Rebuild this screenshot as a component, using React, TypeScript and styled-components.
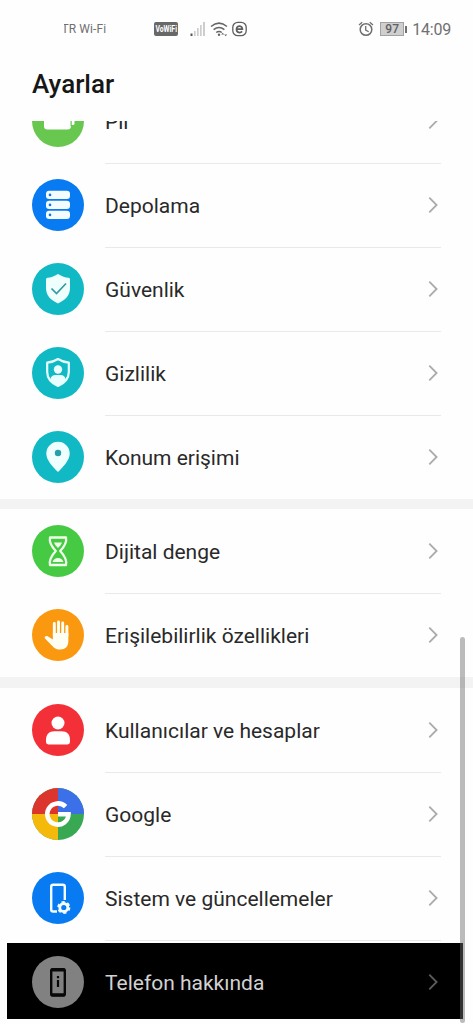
import React from "react";
import styled, { createGlobalStyle } from "styled-components";

const GlobalStyle = createGlobalStyle`
  * { box-sizing: border-box; }
  body { margin: 0; background: #fefefe; font-family: Roboto, "Noto Sans", sans-serif; }
`;

const Screen = styled.main`
  position: relative;
  display: flex;
  flex-direction: column;
  width: 473px;
  height: 1024px;
  overflow: hidden;
  background: #fefefe;
`;

const StatusBar = styled.header`
  display: flex;
  align-items: center;
  flex: none;
  height: 58px;
  padding: 0 22px 0 64px;
  color: #707070;
`;

const Carrier = styled.span`
  width: 90px;
  font-size: 12px;
  letter-spacing: 0.1px;
  overflow: hidden;
  white-space: nowrap;
`;

/* The first letter of the carrier name is partly hidden at its left edge. */
const CarrierName = styled.span`
  display: inline-block;
  margin-left: -2.5px;
`;

const VoWifi = styled.span`
  display: flex;
  align-items: center;
  justify-content: center;
  width: 24px;
  height: 14px;
  border-radius: 2px;
  background: #686868;
  color: #fff;
  font-size: 9px;
  font-weight: 700;
  line-height: 14px;
`;

const VoWifiText = styled.span`
  transform: scaleX(0.76);
`;

const StatusIcons = styled.span`
  display: flex;
  align-items: center;
  gap: 4px;
  margin-left: 12px;
`;

const StatusRight = styled.span`
  display: flex;
  align-items: center;
  margin-left: auto;
`;

const Battery = styled.span`
  display: flex;
  align-items: center;
  margin: 0 5px 0 6px;
  &::after {
    content: "";
    width: 2px;
    height: 7px;
    margin-left: 1px;
    background: #707070;
  }
`;

const BatteryLevel = styled.span`
  width: 24px;
  height: 14px;
  border: 1px solid #a2a2a2;
  background: #cfcfcf;
  color: #606060;
  font-size: 12px;
  font-weight: 500;
  line-height: 12px;
  text-align: center;
`;

const Clock = styled.time`
  padding-top: 1px;
  font-size: 16px;
  line-height: 20px;
  letter-spacing: -0.2px;
`;

const Title = styled.h1`
  flex: none;
  height: 63px;
  margin: 0;
  padding: 9px 32px 0;
  color: #171717;
  font-size: 26px;
  font-weight: 500;
  line-height: 34px;
`;

const List = styled.div`
  flex: 1;
  min-height: 0;
  overflow: hidden;
`;

const Group = styled.section<{ $scrolled?: boolean }>`
  margin-top: ${(p) => (p.$scrolled ? "-42px" : "0")};
  & + & { border-top: 10px solid #f3f3f3; }
  & + & + & { border-top-width: 11px; }
`;

const Row = styled.div<{ $selected?: boolean }>`
  display: flex;
  align-items: center;
  height: ${(p) => (p.$selected ? 76 : 84)}px;
  margin: ${(p) => (p.$selected ? "3px 10px 5px 7px" : "0")};
  padding-top: ${(p) => (p.$selected ? 2 : 0)}px;
  padding-left: ${(p) => (p.$selected ? 25 : 32)}px;
  background: ${(p) => (p.$selected ? "#000" : "transparent")};
  color: ${(p) => (p.$selected ? "#d2d2d2" : "#292929")};
`;

const RowBody = styled.div<{ $divider: boolean; $selected?: boolean }>`
  display: flex;
  align-items: center;
  justify-content: space-between;
  flex: 1;
  height: 100%;
  margin: 0 ${(p) => (p.$selected ? 22 : 32)}px 0 21px;
  padding-right: 2px;
  box-shadow: ${(p) => (p.$divider ? "0 1px 0 #e9e9e9" : "none")};
`;

const Label = styled.span`
  padding-top: 2px;
  font-size: 21px;
  line-height: 28px;
  white-space: nowrap;
`;

const ScrollThumb = styled.div`
  position: absolute;
  top: 637px;
  right: 8px;
  width: 5px;
  height: 386px;
  border-radius: 3px;
  background: rgba(110, 110, 110, 0.46);
`;

const Disc = ({ color, children }: { color: string; children: React.ReactNode }) => (
  <svg width="52" height="52" viewBox="0 0 52 52" fill="none" aria-hidden="true">
    <circle cx="26" cy="26" r="26" fill={color} />
    {children}
  </svg>
);

const Chevron = ({ dim }: { dim?: boolean }) => (
  <svg width="11" height="18" viewBox="0 0 11 18" fill="none" aria-hidden="true">
    <path d="M1.3 1.7 8.6 9l-7.3 7.3" stroke={dim ? "#5c5c5c" : "#ababab"} strokeWidth="1.8" />
  </svg>
);

const SHIELD = "M26 11c3.800 2.500 7.400 3.500 10.500 3.800q1.500.2 1.500 1.700v8.300c0 7.600-4.400 12.200-12 15.600-7.600-3.400-12-8-12-15.600v-8.300q0-1.500 1.500-1.700C18.600 14.500 22.200 13.500 26 11Z";

const PowerIcon = () => (
  <Disc color="#67c74f">
    <path d="M12 14h27v17a3.500 3.500 0 0 1-3.500 3.500H15.500A3.500 3.500 0 0 1 12 31Z" fill="#fff" />
    <path d="M39.500 22h3v6.500q0 1.500-1.500 1.500h-1.500Z" fill="#fff" />
    <path d="M39 25v6" stroke="#67c74f" />
  </Disc>
);

const StorageIcon = () => (
  <Disc color="#087bf2">
    {[11.8, 21.8, 31.8].map((y) => (
      <g key={y}>
        <rect x="14" y={y} width="24" height="8.2" rx="3.2" fill="#f5fcff" />
        <circle cx="18" cy={y + 4.1} r="1.3" fill="#087bf2" />
      </g>
    ))}
  </Disc>
);

const SecurityIcon = () => (
  <Disc color="#10b9c3">
    <path d={SHIELD} fill="#effffd" />
    <path d="m19.500 25.500 5 5L34 20.500" stroke="#359ba3" strokeWidth="1.700" />
  </Disc>
);

const PrivacyIcon = () => (
  <Disc color="#10b9c3">
    <path d="M26 12c3.500 2.200 6.800 3.300 10.800 3.700v9.200c0 7-4 11-10.800 14.100-6.800-3.100-10.800-7.100-10.800-14.100v-9.200C19.200 15.300 22.500 14.200 26 12Z" stroke="#e8ffff" strokeWidth="2.200" strokeLinejoin="round" />
    <circle cx="26" cy="22.500" r="4.200" fill="#e8ffff" />
    <path d="M18.200 32.500c.6-3.200 2.800-4.500 5.300-4.500h5c2.500 0 4.700 1.300 5.300 4.500-1.700 3-4.300 5-7.800 6.500-3.500-1.500-6.100-3.500-7.800-6.500Z" fill="#e8ffff" />
  </Disc>
);

const LocationIcon = () => (
  <Disc color="#10b9c3">
    <path d="M26 10.800a11.700 11.700 0 0 0-11.700 11.700C14.300 29.200 20.500 35.500 26 41c5.500-5.500 11.700-11.800 11.700-18.500A11.700 11.700 0 0 0 26 10.800Z" fill="#efffff" />
    <circle cx="26" cy="22" r="3.200" fill="#269fa8" />
  </Disc>
);

const BalanceIcon = () => (
  <Disc color="#46ca43">
    <path d="M18 12.500h16c1 4.700-1.300 8.700-5.800 13.500 4.500 4.800 6.800 9.500 5.800 14H18c-1-4.500 1.300-9.200 5.800-14-4.500-4.800-6.800-8.800-5.800-13.500Z" stroke="#efffe9" strokeWidth="2.300" strokeLinejoin="round" />
    <path d="M22 17.500h8q-.6 2.700-4 5.500-3.400-2.800-4-5.500ZM20.500 37c1-2.500 3-4 5.500-4s4.500 1.500 5.500 4Z" fill="#efffe9" />
  </Disc>
);

const AccessibilityIcon = () => (
  <Disc color="#fa9810">
    <path d="M22.300 26V14.500M26.500 25V13M30.700 25V14M34.900 27V17.500" stroke="#fffef3" strokeWidth="2.900" strokeLinecap="round" />
    <path d="M20.850 24h15.500v8.500c0 5-3.200 8-8 8-3.500 0-5.700-1-8-3.600l-7.400-7.400c-1.100-1.700.9-3.200 2.700-2.200l5.200 3.200Z" fill="#fffef3" />
  </Disc>
);

const AccountsIcon = () => (
  <Disc color="#f33037">
    <circle cx="26" cy="19" r="6.500" fill="#fff" />
    <path d="M14 36.500c0-6.500 3-9.200 8.500-9.200h7c5.500 0 8.500 2.700 8.500 9.200v1.600q0 2.400-2.400 2.400H16.400Q14 40.500 14 38.100Z" fill="#fff" />
  </Disc>
);

const GoogleIcon = () => (
  <Disc color="#38a853">
    <path d="M26 26H0A26 26 0 0 1 26 0Z" fill="#dc352e" />
    <path d="M26 26V0a26 26 0 0 1 26 26Z" fill="#3b70e8" />
    <path d="M26 26v26A26 26 0 0 1 0 26Z" fill="#f5b90b" />
    <path d="M33.600 18.700A10.600 10.600 0 1 0 36.500 26.200H26" stroke="#fff" strokeWidth="4.600" />
  </Disc>
);

const SystemIcon = () => (
  <Disc color="#087bf2">
    <path d="M25 39.500h-3.800q-2 0-2-2V14.800q0-2 2-2h9.600q2 0 2 2V28" stroke="#f4fdff" strokeWidth="2.400" />
    <circle cx="31.800" cy="35.500" r="4" stroke="#f4fdff" strokeWidth="2.800" />
    <circle cx="31.800" cy="35.500" r="5.700" stroke="#f4fdff" strokeWidth="1.800" strokeDasharray="3.200 2.770" />
  </Disc>
);

const AboutIcon = () => (
  <Disc color="#818181">
    <rect x="19.200" y="13.200" width="13.600" height="26.400" rx="1.500" stroke="#080808" strokeWidth="2.400" />
    <path d="M19 14h14M19 38.700h14" stroke="#080808" strokeWidth="3" />
    <path d="M26 20v2.200M26 24v7" stroke="#080808" strokeWidth="2.200" />
  </Disc>
);

const AlarmIcon = () => (
  <svg width="16" height="18" viewBox="0 0 16 18" fill="none" stroke="#707070" aria-hidden="true">
    <circle cx="8" cy="9.500" r="5.800" strokeWidth="1.500" />
    <path d="M7.700 6v4l3 1.700M1 5l3.200-2.700M15 5l-3.200-2.700" strokeWidth="1.300" />
  </svg>
);

const SignalIcon = () => (
  <svg width="16" height="16" viewBox="0 0 16 16" aria-hidden="true">
    <path d="M.5 12.500h2V15h-2Z" fill="#555" />
    <path d="M4 10h1.700v5H4ZM7 7h1.700v8H7ZM10 4h1.700v11H10ZM13 1h2v14h-2Z" fill="#cdcdcd" />
  </svg>
);

const WifiIcon = () => (
  <svg width="18" height="16" viewBox="0 0 18 16" fill="none" stroke="#656565" strokeWidth="1.500" aria-hidden="true">
    <path d="M1 5.500Q9-1.300 17 5.500M3.600 8.600q5.400-4.400 10.800 0M6.200 11.500q2.800-2.200 5.600 0" />
    <circle cx="9" cy="13.700" r="1.200" fill="#656565" stroke="none" />
    <path d="m11.200 13.500 1.500-1.700 1.500 1.700Zm3 0 1.500 1.700 1.500-1.700Z" fill="#656565" stroke="none" />
  </svg>
);

const BrowserIcon = () => (
  <svg width="15" height="16" viewBox="0 0 15 16" fill="none" stroke="#5e5e5e" aria-hidden="true">
    <rect x=".8" y="1.300" width="13.400" height="13.400" rx="5" strokeWidth="1.300" />
    <path d="M4.700 8.200h5.700c0-4-5.900-4-5.900 0 0 3.800 3.900 4 5.600 2.200" strokeWidth="1.700" />
  </svg>
);

type Item = { label: string; icon: React.ComponentType; selected?: boolean };

const groups: Item[][] = [
  [
    { label: "Pil", icon: PowerIcon },
    { label: "Depolama", icon: StorageIcon },
    { label: "Güvenlik", icon: SecurityIcon },
    { label: "Gizlilik", icon: PrivacyIcon },
    { label: "Konum erişimi", icon: LocationIcon },
  ],
  [
    { label: "Dijital denge", icon: BalanceIcon },
    { label: "Erişilebilirlik özellikleri", icon: AccessibilityIcon },
  ],
  [
    { label: "Kullanıcılar ve hesaplar", icon: AccountsIcon },
    { label: "Google", icon: GoogleIcon },
    { label: "Sistem ve güncellemeler", icon: SystemIcon },
    { label: "Telefon hakkında", icon: AboutIcon, selected: true },
  ],
];

export default function App() {
  return (
    <Screen>
      <GlobalStyle />
      <StatusBar>
        <Carrier><CarrierName>TR Wi-Fi</CarrierName></Carrier>
        <VoWifi><VoWifiText>VoWiFi</VoWifiText></VoWifi>
        <StatusIcons>
          <SignalIcon />
          <WifiIcon />
          <BrowserIcon />
        </StatusIcons>
        <StatusRight>
          <AlarmIcon />
          <Battery><BatteryLevel>97</BatteryLevel></Battery>
          <Clock>14:09</Clock>
        </StatusRight>
      </StatusBar>
      <Title>Ayarlar</Title>
      <List>
        {groups.map((items, g) => (
          <Group key={g} $scrolled={g === 0}>
            {items.map(({ label, icon: Icon, selected }, i) => (
              <Row key={label} $selected={selected}>
                <Icon />
                <RowBody $divider={i < items.length - 1} $selected={selected}>
                  <Label>{label}</Label>
                  <Chevron dim={selected} />
                </RowBody>
              </Row>
            ))}
          </Group>
        ))}
      </List>
      <ScrollThumb />
    </Screen>
  );
}
